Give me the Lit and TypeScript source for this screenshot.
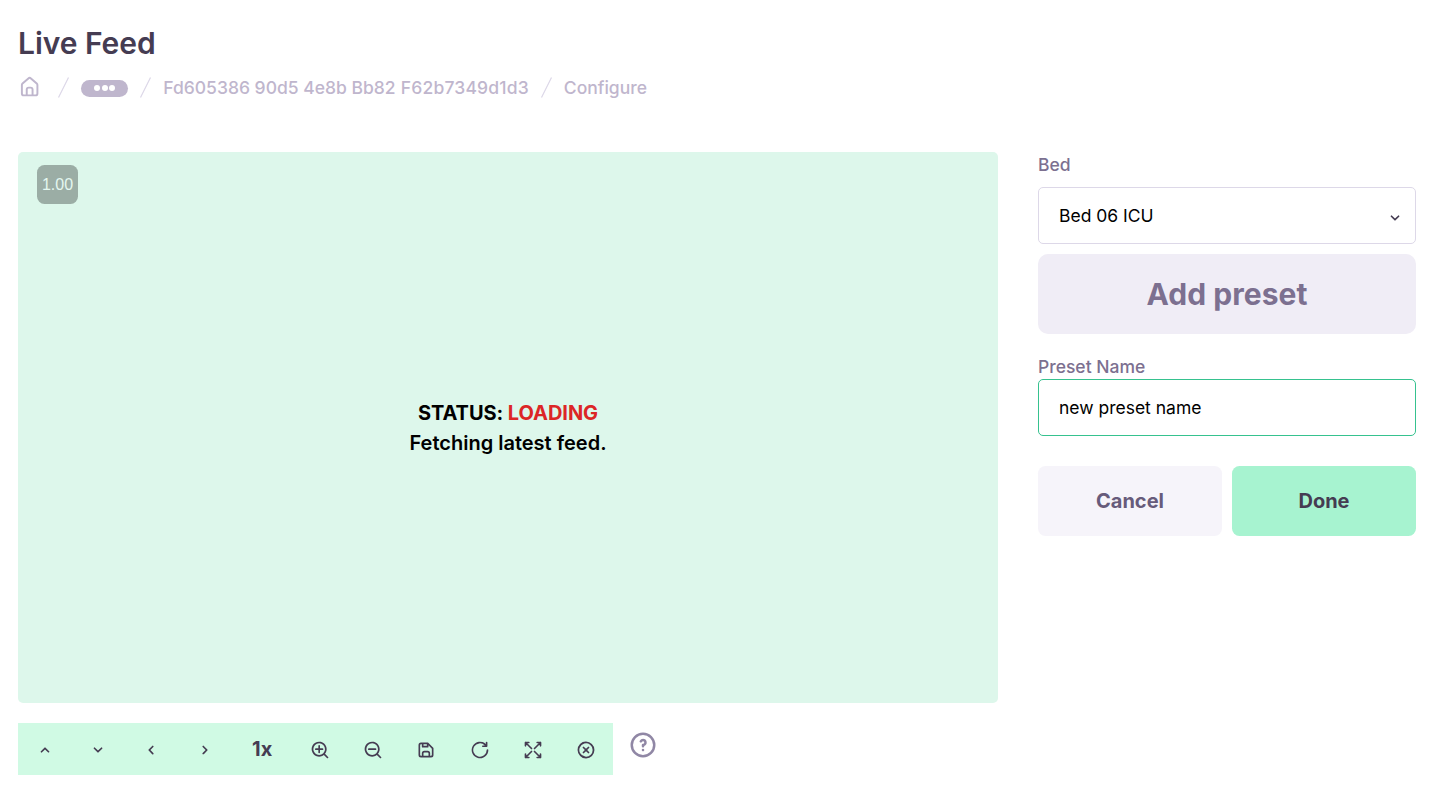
import { LitElement, html, css, svg } from "lit";
import { customElement, property } from "lit/decorators.js";

const ICONS: Record<string, string> = {
  home: "M20,8h0L14,2.74a3,3,0,0,0-4,0L4,8a3,3,0,0,0-1,2.26V19a3,3,0,0,0,3,3H18a3,3,0,0,0,3-3V10.25A3,3,0,0,0,20,8ZM14,20H10V15a1,1,0,0,1,1-1h2a1,1,0,0,1,1,1Zm5-1a1,1,0,0,1-1,1H16V15a3,3,0,0,0-3-3H11a3,3,0,0,0-3,3v5H6a1,1,0,0,1-1-1V10.25a1,1,0,0,1,.34-.75l6-5.25a1,1,0,0,1,1.32,0l6,5.25a1,1,0,0,1,.34.75Z",
  up: "M17,13.41,12.71,9.17a1,1,0,0,0-1.42,0L7.05,13.41a1,1,0,0,0,0,1.42,1,1,0,0,0,1.41,0L12,11.29l3.54,3.54a1,1,0,0,0,.7.29,1,1,0,0,0,.71-.29A1,1,0,0,0,17,13.41Z",
  down: "M17,9.17a1,1,0,0,0-1.41,0L12,12.71,8.46,9.17a1,1,0,0,0-1.41,0,1,1,0,0,0,0,1.42l4.24,4.24a1,1,0,0,0,1.42,0L17,10.59A1,1,0,0,0,17,9.17Z",
  left: "M11.29,12l3.54-3.54a1,1,0,0,0,0-1.41,1,1,0,0,0-1.42,0L9.17,11.29a1,1,0,0,0,0,1.42L13.41,17a1,1,0,0,0,.71.29,1,1,0,0,0,.71-.29,1,1,0,0,0,0-1.41Z",
  right: "M14.83,11.29,10.59,7.05a1,1,0,0,0-1.42,0,1,1,0,0,0,0,1.41L12.71,12,9.17,15.54a1,1,0,0,0,0,1.41,1,1,0,0,0,.71.29,1,1,0,0,0,.71-.29l4.24-4.24A1,1,0,0,0,14.83,11.29Z",
  zoomIn: "M21.71,20.29,18,16.61A9,9,0,1,0,16.61,18l3.68,3.68a1,1,0,0,0,1.42,0A1,1,0,0,0,21.71,20.29ZM11,18a7,7,0,1,1,7-7A7,7,0,0,1,11,18ZM15,10H12V7a1,1,0,0,0-2,0v3H7a1,1,0,0,0,0,2h3v3a1,1,0,0,0,2,0V12h3a1,1,0,0,0,0-2Z",
  zoomOut: "M21.71,20.29,18,16.61A9,9,0,1,0,16.61,18l3.68,3.68a1,1,0,0,0,1.42,0A1,1,0,0,0,21.71,20.29ZM11,18a7,7,0,1,1,7-7A7,7,0,0,1,11,18ZM15,10H7a1,1,0,0,0,0,2h8a1,1,0,0,0,0-2Z",
  save: "M20.71,9.29l-6-6a1,1,0,0,0-.32-.21A1.09,1.09,0,0,0,14,3H6A3,3,0,0,0,3,6V18a3,3,0,0,0,3,3H18a3,3,0,0,0,3-3V10A1,1,0,0,0,20.71,9.29ZM9,5h4V7H9Zm6,14H9V16a1,1,0,0,1,1-1h4a1,1,0,0,1,1,1Zm4-1a1,1,0,0,1-1,1H17V16a3,3,0,0,0-3-3H10a3,3,0,0,0-3,3v3H6a1,1,0,0,1-1-1V6A1,1,0,0,1,6,5H7V8A1,1,0,0,0,8,9h6a1,1,0,0,0,1-1V6.41l4,4Z",
  redo: "M21,11a1,1,0,0,0-1,1,8.05,8.05,0,1,1-2.22-5.5h-2.4a1,1,0,0,0,0,2h4.53a1,1,0,0,0,1-1V3a1,1,0,0,0-2,0V4.77A10,10,0,1,0,22,12,1,1,0,0,0,21,11Z",
  close: "M15.71,8.29a1,1,0,0,0-1.42,0L12,10.59,9.71,8.29A1,1,0,0,0,8.29,9.71L10.59,12l-2.3,2.29a1,1,0,0,0,0,1.42,1,1,0,0,0,1.42,0L12,13.41l2.29,2.3a1,1,0,0,0,1.42,0,1,1,0,0,0,0-1.42L13.41,12l2.3-2.29A1,1,0,0,0,15.71,8.29Zm3.36-3.36A10,10,0,1,0,4.93,19.07,10,10,0,1,0,19.07,4.93ZM17.66,17.66A8,8,0,1,1,20,12,7.95,7.95,0,0,1,17.66,17.66Z",
  help: "M11.29,15.29a1.58,1.58,0,0,0-.12.15.76.76,0,0,0-.09.18.64.64,0,0,0-.06.18,1.36,1.36,0,0,0,0,.2.84.84,0,0,0,.08.38.9.9,0,0,0,.54.54.94.94,0,0,0,.76,0,.9.9,0,0,0,.54-.54A1,1,0,0,0,13,16a1,1,0,0,0-.29-.71A1,1,0,0,0,11.29,15.29ZM12,2A10,10,0,1,0,22,12,10,10,0,0,0,12,2Zm0,18a8,8,0,1,1,8-8A8,8,0,0,1,12,20ZM12,7A3,3,0,0,0,9.4,8.5a1,1,0,1,0,1.73,1A1,1,0,0,1,12,9a1,1,0,0,1,0,2,1,1,0,0,0-1,1v1a1,1,0,0,0,2,0v-.18A3,3,0,0,0,12,7Z",
};

@customElement("ui-icon")
class UiIcon extends LitElement {
  @property() name = "home";
  static styles = css`
    :host { display: block; width: 20px; height: 20px; flex: none; }
    svg { display: block; width: 100%; height: 100%; }
    .solid { fill: currentColor; }
    .line { fill: none; stroke: currentColor; stroke-width: 2; stroke-linecap: round; stroke-linejoin: round; }
  `;
  render() {
    const shape =
      this.name === "expand"
        ? svg`<path class="line" d="M10.2 10.2L3 3M3 7V3H7M13.8 10.2L21 3M17 3H21V7M10.2 13.8L3 21M3 17V21H7M13.8 13.8L21 21M17 21H21V17"/>`
        : svg`<path class="solid" d=${ICONS[this.name]}/>`;
    return html`<svg viewBox="0 0 24 24" aria-hidden="true">${shape}</svg>`;
  }
}

@customElement("app-root")
class AppRoot extends LitElement {
  static styles = css`
    :host {
      display: block;
      box-sizing: border-box;
      height: 791px;
      padding: 23px 39px 0 18px;
      background: #fff;
      font-family: Inter, "Liberation Sans", sans-serif;
      font-size: 17.5px;
      line-height: 25px;
      color: #000;
      overflow: hidden;
    }
    *, *::before { box-sizing: border-box; }
    button { font: inherit; border: 0; padding: 0; margin: 0; }
    .title { margin: 0; font-size: 30px; line-height: 40px; font-weight: 600; letter-spacing: -0.05px; color: #453c52; }
    .crumbs { display: flex; align-items: center; height: 25px; margin-top: 12px; gap: 5px; font-weight: 500; color: #bfb6cd; }
    .home { width: 23.3px; height: 23.3px; margin: 0 5px 2px 0; }
    .tail { margin-left: 0.5px; letter-spacing: 0.17px; }
    .slash { width: 25px; height: 25px; flex: none; fill: #ddd8e8; }
    .more { display: flex; align-items: center; justify-content: center; gap: 1.5px; width: 47px; height: 17px; margin-top: 2px; padding-bottom: 1px; border-radius: 9px; background: #bfb6cd; }
    .dot { width: 6px; height: 6px; border-radius: 50%; background: #fff; }
    .main { display: grid; grid-template-columns: 980px 378px; column-gap: 40px; margin-top: 52px; }
    .feed { position: relative; display: flex; flex-direction: column; align-items: center; justify-content: center; height: 551px; border-radius: 5px; background: #ddf7eb; font-size: 20px; line-height: 30px; font-weight: 600; }
    .status { font-weight: 700; letter-spacing: -0.05px; }
    .loading { color: #dc2626; }
    .badge { position: absolute; left: 19px; top: 13px; width: 41px; height: 39px; border-radius: 7.5px; background: #9bada5; color: #e4f7ef; font: 400 16px/39px "Liberation Sans", sans-serif; text-align: center; }
    .controls { display: flex; align-items: flex-start; margin-top: 20px; }
    .bar { display: flex; height: 52px; background: #d0fae4; color: #453c52; }
    .tool { display: flex; align-items: center; justify-content: center; width: 53.3px; height: 52px; padding-top: 1px; background: none; color: inherit; }
    .speed { width: 62px; font-size: 20px; font-weight: 700; }
    .help { width: 30px; height: 30px; margin: 7px 0 0 15px; color: #9087a5; }
    .label { display: block; font-weight: 500; color: #7c7090; }
    .field { display: flex; align-items: center; justify-content: space-between; height: 57px; padding: 0 10px 0 20px; border: 1px solid #ddd8e8; border-radius: 5px; background: #fff; }
    .select { margin-top: 10px; }
    .select ui-icon { color: #453c52; margin-top: 4px; }
    .active { border-color: #36c28f; }
    .add { display: block; width: 100%; height: 80px; margin-top: 10px; border-radius: 10px; background: #f0edf6; color: #7c7090; font-size: 30px; font-weight: 700; letter-spacing: 0.05px; }
    .second { margin-top: 20px; }
    .actions { display: grid; grid-template-columns: 1fr 1fr; gap: 10px; margin-top: 30px; }
    .action { height: 70px; border-radius: 7.5px; background: #f6f4fa; color: #675b7b; font-size: 20px; font-weight: 700; }
    .done { background: #a7f3d0; color: #453c52; }
  `;

  private slash() {
    return html`<svg class="slash" viewBox="0 0 20 20" aria-hidden="true"><path d="M5.555 17.776l8-16 .894.448-8 16-.894-.448z"/></svg>`;
  }

  private tool(name: string) {
    return html`<button class="tool" aria-label=${name}><ui-icon name=${name}></ui-icon></button>`;
  }

  render() {
    return html`
      <h1 class="title">Live Feed</h1>
      <nav class="crumbs">
        <ui-icon class="home" name="home"></ui-icon>
        ${this.slash()}
        <span class="more"><i class="dot"></i><i class="dot"></i><i class="dot"></i></span>
        ${this.slash()}
        <span>Fd605386 90d5 4e8b Bb82 <span class="tail">F62b7349d1d3</span></span>
        ${this.slash()}
        <span>Configure</span>
      </nav>
      <main class="main">
        <section>
          <div class="feed">
            <span class="badge">1.00</span>
            <div class="status">STATUS: <span class="loading">LOADING</span></div>
            <div>Fetching latest feed.</div>
          </div>
          <div class="controls">
            <div class="bar">
              ${["up", "down", "left", "right"].map((n) => this.tool(n))}
              <button class="tool speed">1x</button>
              ${["zoomIn", "zoomOut", "save", "redo", "expand", "close"].map((n) => this.tool(n))}
            </div>
            <ui-icon class="help" name="help"></ui-icon>
          </div>
        </section>
        <aside>
          <span class="label">Bed</span>
          <div class="field select"><span>Bed 06 ICU</span><ui-icon name="down"></ui-icon></div>
          <button class="add">Add preset</button>
          <span class="label second">Preset Name</span>
          <div class="field active"><span>new preset name</span></div>
          <div class="actions">
            <button class="action">Cancel</button>
            <button class="action done">Done</button>
          </div>
        </aside>
      </main>
    `;
  }
}
